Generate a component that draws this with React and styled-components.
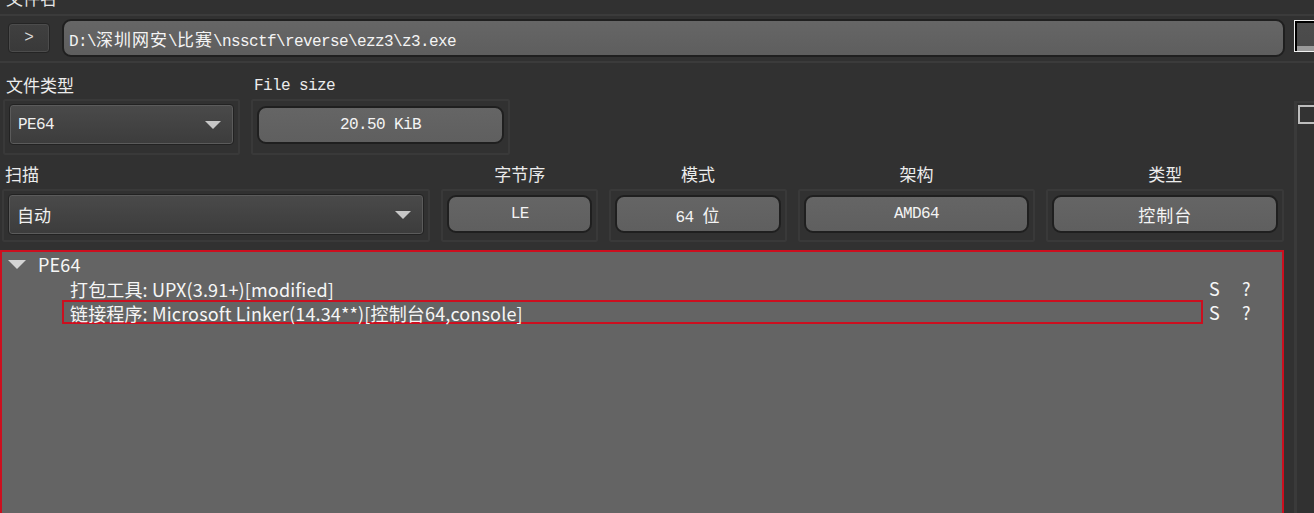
import React from "react";
import styled, { createGlobalStyle } from "styled-components";

const Global = createGlobalStyle`
  html, body { margin: 0; padding: 0; background: #313131; }
  body { width: 1314px; height: 513px; overflow: hidden; }
  * { box-sizing: border-box; }
`;

const Page = styled.div`
  width: 1314px;
  height: 513px;
  overflow: hidden;
  background: #313131;
  color: #ececec;
  font-family: "Noto Sans CJK SC", sans-serif;
`;

const TopLabel = styled.div`
  margin-top: -14px;
  height: 24px;
  line-height: 24px;
  padding-left: 6px;
  font-size: 17px;
  color: #e6e6e6;
`;

const PathFrame = styled.div`
  margin-top: 4px;
  height: 49px;
  border-top: 2px solid #3b3b3b;
  border-bottom: 2px solid #3b3b3b;
  display: flex;
  align-items: flex-start;
  padding: 3px 0 0 8px;
  gap: 12px;
`;

const ArrowButton = styled.div`
  margin-top: 4px;
  width: 42px;
  height: 30px;
  border: 1px solid #242424;
  border-radius: 4px;
  box-shadow: inset 0 0 0 1px #4c4c4c;
  background: linear-gradient(#404040, #393939);
  display: flex;
  align-items: center;
  justify-content: center;
  color: #d8d8d8;
  font-family: "Liberation Mono", monospace;
  font-size: 16px;
`;

const PathField = styled.div`
  width: 1227px;
  height: 38px;
  border: 2px solid #1f1f1f;
  border-radius: 9px;
  background: linear-gradient(#666666, #5e5e5e);
  display: flex;
  align-items: center;
  padding-left: 5px;
  font-family: "Liberation Mono", monospace;
  font-size: 16px;
  letter-spacing: -0.6px;
  color: #f4f4f4;
  white-space: nowrap;
`;

const MonoText = styled.span`
  white-space: pre;
`;

const Cjk = styled.span`
  font-family: "Noto Sans CJK SC", sans-serif;
  font-size: 17px;
  letter-spacing: 1px;
`;

const FocusWidget = styled.div`
  margin-left: -3px;
  margin-top: 1px;
  width: 20px;
  height: 32px;
  border: 1px solid #f0f0f0;
  border-right: none;
  box-shadow: inset 2px 2px 0 #000;
  background: linear-gradient(#4d4d4d, #4a4a4a 85%, #9a9a9a 85%);
  flex: none;
`;

const Body = styled.div`
  display: grid;
  grid-template-columns: 1284px 1fr;
`;

const MainCol = styled.div`
  display: flex;
  flex-direction: column;
`;

const SideCol = styled.div`
  padding-left: 10px;
  padding-top: 38px;
`;

const SideFrame = styled.div`
  height: 420px;
  border-left: 3px solid #3a3a3a;
  border-top: 2px solid #3a3a3a;
  padding: 2px 0 0 1px;
`;

const CheckBox = styled.div`
  width: 24px;
  height: 19px;
  border: 2px solid #bdbdbd;
  border-right: none;
  background: #333;
`;

const Row = styled.div`
  display: flex;
  gap: ${(p) => p.$gap || 10}px;
  align-items: flex-end;
  padding-left: ${(p) => p.$pl || 3}px;
  margin-top: ${(p) => p.$mt || 0}px;
`;

const Field = styled.div`
  display: flex;
  flex-direction: column;
  width: ${(p) => p.$w}px;
`;

const Label = styled.div`
  height: 24px;
  line-height: 24px;
  color: #ececec;
  margin-bottom: ${(p) => p.$mb || 2}px;
  text-align: ${(p) => (p.$center ? "center" : "left")};
  padding-left: ${(p) => (p.$center ? 0 : 3)}px;
  font-family: ${(p) =>
    p.$mono ? `"Liberation Mono", monospace` : `"Noto Sans CJK SC", sans-serif`};
  font-size: ${(p) => (p.$mono ? 16 : 17)}px;
  letter-spacing: ${(p) => (p.$mono ? "-0.6px" : "normal")};
`;

const Group = styled.div`
  height: ${(p) => p.$h || 56}px;
  border: 2px solid #393939;
  border-radius: 2px;
  padding: 3px 4px 0 4px;
`;

const Combo = styled.div`
  height: 41px;
  border: 1px solid #222;
  border-radius: 4px;
  box-shadow: inset 0 0 0 1px #5b5b5b;
  background: linear-gradient(#4a4a4a, #3c3c3c);
  display: flex;
  align-items: center;
  justify-content: space-between;
  padding: 0 12px 0 8px;
  color: #f0f0f0;
  font-family: ${(p) =>
    p.$mono ? `"Liberation Mono", monospace` : `"Noto Sans CJK SC", sans-serif`};
  font-size: ${(p) => (p.$mono ? 16 : 17)}px;
  letter-spacing: ${(p) => (p.$mono ? "-0.6px" : "normal")};
`;

const Caret = styled.span`
  width: 0;
  height: 0;
  border-left: 8px solid transparent;
  border-right: 8px solid transparent;
  border-top: 8px solid #c8c8c8;
`;

const ValueButton = styled.div`
  margin-top: ${(p) => p.$mt || 1}px;
  height: 38px;
  border: 2px solid #1f1f1f;
  border-radius: 9px;
  background: linear-gradient(#656565, #5f5f5f);
  display: flex;
  align-items: center;
  justify-content: center;
  font-family: "Liberation Mono", monospace;
  font-size: 16px;
  letter-spacing: -0.6px;
  color: #f4f4f4;
  white-space: nowrap;
`;

const Tree = styled.div`
  margin-top: 8px;
  height: 270px;
  border: 2px solid #cc0f1f;
  border-bottom: none;
  background: #646464;
  color: #f6f6f6;
  font-family: "Noto Sans CJK SC", sans-serif;
  font-size: 18px;
  letter-spacing: 0.15px;
`;

const TreeRow = styled.div`
  height: 24px;
  display: flex;
  align-items: center;
  padding-left: ${(p) => p.$indent}px;
`;

const TreeCaret = styled.span`
  width: 0;
  height: 0;
  border-left: 9px solid transparent;
  border-right: 9px solid transparent;
  border-top: 9px solid #d4d4d4;
  margin-right: 12px;
  margin-left: 6px;
  margin-top: 1px;
`;

const ItemText = styled.div`
  flex: none;
  width: ${(p) => p.$w}px;
  height: 24px;
  line-height: 22px;
  padding-left: 6px;
  white-space: nowrap;
  border: 2px solid ${(p) => (p.$selected ? "#cc0f1f" : "transparent")};
`;

const Flag = styled.span`
  width: ${(p) => p.$w}px;
  flex: none;
  padding-left: ${(p) => p.$pl || 0}px;
`;

const Mono = ({ children }) => {
  const parts = children.split(/([\u4e00-\u9fff]+)/);
  return (
    <MonoText>
      {parts.map((s, i) =>
        /[\u4e00-\u9fff]/.test(s) ? (
          <Cjk key={i}>{s}</Cjk>
        ) : (
          <React.Fragment key={i}>{s}</React.Fragment>
        )
      )}
    </MonoText>
  );
};

export default function App() {
  return (
    <Page>
      <Global />
      <TopLabel>文件名</TopLabel>
      <PathFrame>
        <ArrowButton>&gt;</ArrowButton>
        <PathField>
          <Mono>{"D:\\深圳网安\\比赛\\nssctf\\reverse\\ezz3\\z3.exe"}</Mono>
        </PathField>
        <FocusWidget />
      </PathFrame>
      <Body>
        <MainCol>
          <Row $mt={10} $gap={11}>
            <Field $w={237}>
              <Label>文件类型</Label>
              <Group>
                <Combo $mono>
                  PE64
                  <Caret />
                </Combo>
              </Group>
            </Field>
            <Field $w={259}>
              <Label $mono $mb={1}>File size</Label>
              <Group>
                <ValueButton $mt={2}>20.50 KiB</ValueButton>
              </Group>
            </Field>
          </Row>
          <Row $mt={7} $gap={11} $pl={2}>
            <Field $w={429}>
              <Label $mb={3}>扫描</Label>
              <Group $h={53}>
                <Combo>
                  自动
                  <Caret />
                </Combo>
              </Group>
            </Field>
            <Field $w={157}>
              <Label $center $mb={3}>字节序</Label>
              <Group $h={53}>
                <ValueButton>LE</ValueButton>
              </Group>
            </Field>
            <Field $w={178}>
              <Label $center $mb={3}>模式</Label>
              <Group $h={53}>
                <ValueButton>
                  <Mono>{"64 位"}</Mono>
                </ValueButton>
              </Group>
            </Field>
            <Field $w={238}>
              <Label $center $mb={3}>架构</Label>
              <Group $h={53}>
                <ValueButton>AMD64</ValueButton>
              </Group>
            </Field>
            <Field $w={238}>
              <Label $center $mb={3}>类型</Label>
              <Group $h={53}>
                <ValueButton>
                  <Mono>控制台</Mono>
                </ValueButton>
              </Group>
            </Field>
          </Row>
          <Tree>
            <TreeRow $indent={0}>
              <TreeCaret />
              PE64
            </TreeRow>
            <TreeRow $indent={60}>
              <ItemText $w={1141}>打包工具: UPX(3.91+)[modified]</ItemText>
              <Flag $w={39} $pl={6}>S</Flag>
              <Flag $w={20}>?</Flag>
            </TreeRow>
            <TreeRow $indent={60}>
              <ItemText $w={1141} $selected>
                链接程序: Microsoft Linker(14.34**)[控制台64,console]
              </ItemText>
              <Flag $w={39} $pl={6}>S</Flag>
              <Flag $w={20}>?</Flag>
            </TreeRow>
          </Tree>
        </MainCol>
        <SideCol>
          <SideFrame>
            <CheckBox />
          </SideFrame>
        </SideCol>
      </Body>
    </Page>
  );
}
